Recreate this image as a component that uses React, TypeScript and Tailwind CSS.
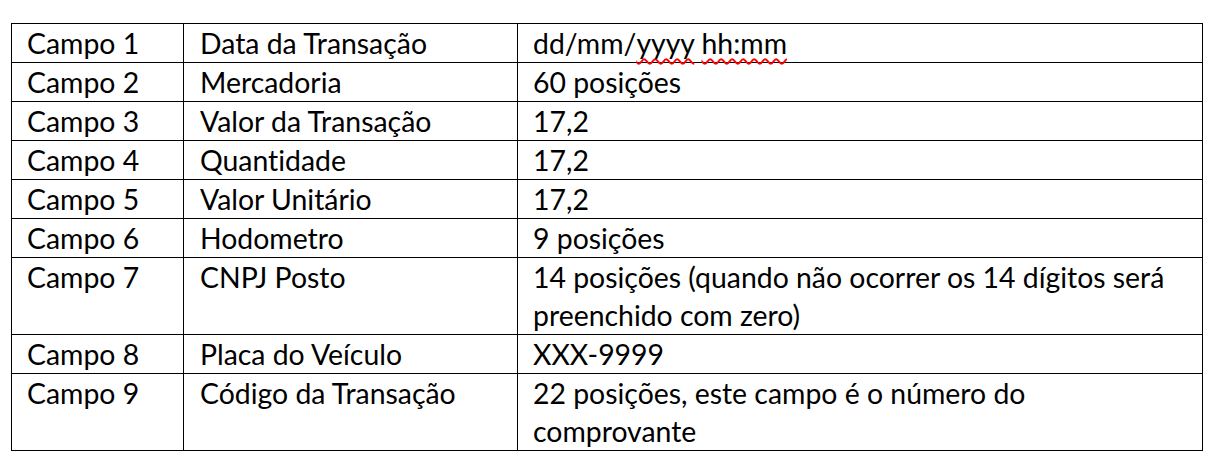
import React from "react";

const sq =
  "underline decoration-wavy decoration-[#ff0000] decoration-[1.5px] underline-offset-[4px] [text-decoration-skip-ink:none]";

const rows: { a: string; b: string; c: React.ReactNode }[] = [
  {
    a: "Campo 1",
    b: "Data da Transação",
    c: (
      <>
        dd/mm/<span className={sq}>yyyy</span> <span className={sq}>hh:mm</span>
      </>
    ),
  },
  { a: "Campo 2", b: "Mercadoria", c: "60 posições" },
  { a: "Campo 3", b: "Valor da Transação", c: "17,2" },
  { a: "Campo 4", b: "Quantidade", c: "17,2" },
  { a: "Campo 5", b: "Valor Unitário", c: "17,2" },
  { a: "Campo 6", b: "Hodometro", c: "9 posições" },
  {
    a: "Campo 7",
    b: "CNPJ Posto",
    c: (
      <>
        14 posições (quando não ocorrer os 14 dígitos será
        <br />
        preenchido com zero)
      </>
    ),
  },
  { a: "Campo 8", b: "Placa do Veículo", c: "XXX-9999" },
  {
    a: "Campo 9",
    b: "Código da Transação",
    c: (
      <>
        22 posições, este campo é o número do
        <br />
        comprovante
      </>
    ),
  },
];

export default function App() {
  return (
    <div className="w-[1224px] h-[474px] bg-white pt-[23px] pl-[11px]">
      <div
        className="grid grid-cols-[172px_334px_685px] w-[1192px] border-l border-t border-black text-black text-[28.4px] leading-[38px] [font-variant-ligatures:none]"
        style={{ fontFamily: "Lato, 'Open Sans', sans-serif" }}
      >
        {rows.map((r) => (
          <React.Fragment key={r.a}>
            <div className="border-r border-b border-black pl-[15px] whitespace-nowrap">{r.a}</div>
            <div className="border-r border-b border-black pl-[16px] whitespace-nowrap">{r.b}</div>
            <div className="border-r border-b border-black pl-[15px] whitespace-nowrap">{r.c}</div>
          </React.Fragment>
        ))}
      </div>
    </div>
  );
}
